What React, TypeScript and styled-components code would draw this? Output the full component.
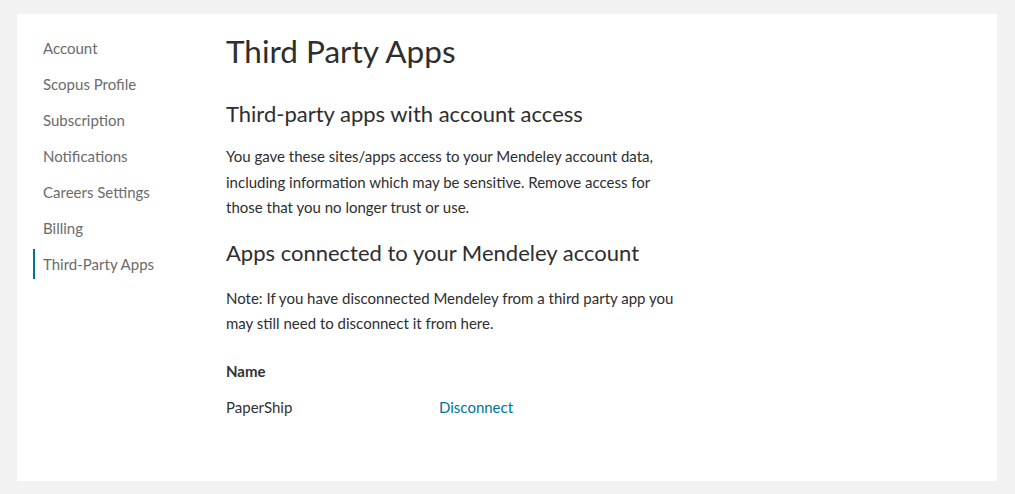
import styled, { createGlobalStyle } from "styled-components";

const GlobalStyle = createGlobalStyle`
  html, body {
    margin: 0;
    padding: 0;
    background: #f2f2f2;
  }
  body {
    font-family: Lato, "Open Sans", sans-serif;
    color: #323232;
  }
`;

const navItems = [
  "Account",
  "Scopus Profile",
  "Subscription",
  "Notifications",
  "Careers Settings",
  "Billing",
  "Third-Party Apps",
];

const apps = [{ name: "PaperShip" }];

const App = () => {
  return (
    <>
      <GlobalStyle />
      <Page>
        <Card>
          <Sidebar>
            {navItems.map((item) => (
              <NavItem key={item} $active={item === "Third-Party Apps"}>
                {item}
              </NavItem>
            ))}
          </Sidebar>
          <Main>
            <Title>Third Party Apps</Title>
            <Heading>Third-party apps with account access</Heading>
            <Text>
              You gave these sites/apps access to your Mendeley account data,
              including information which may be sensitive. Remove access for
              those that you no longer trust or use.
            </Text>
            <Heading>Apps connected to your Mendeley account</Heading>
            <Text $spaced>
              Note: If you have disconnected Mendeley from a third party app you
              may still need to disconnect it from here.
            </Text>
            <Table>
              <thead>
                <tr>
                  <Th>Name</Th>
                  <Th />
                </tr>
              </thead>
              <tbody>
                {apps.map((app) => (
                  <tr key={app.name}>
                    <Td>{app.name}</Td>
                    <Td>
                      <Link href="#">Disconnect</Link>
                    </Td>
                  </tr>
                ))}
              </tbody>
            </Table>
          </Main>
        </Card>
      </Page>
    </>
  );
};

const Page = styled.div`
  padding: 14px 18px 13px 17px;
`;

const Card = styled.div`
  background: #fff;
  height: 467px;
  display: flex;
  box-sizing: border-box;
`;

const Sidebar = styled.nav`
  width: 193px;
  padding: 19px 0 0 16px;
  display: flex;
  flex-direction: column;
  gap: 6px;
`;

const NavItem = styled.a<{ $active: boolean }>`
  display: block;
  height: 30px;
  line-height: 30px;
  padding-left: 8px;
  border-left: 2px solid ${({ $active }) => ($active ? "#007398" : "transparent")};
  font-size: 15px;
  color: #6b6b6b;
  cursor: pointer;
`;

const Main = styled.main`
  padding-top: 17px;
  width: 455px;
`;

const Title = styled.h1`
  margin: 0 0 28px;
  font-size: 31.5px;
  font-weight: 400;
  line-height: 40px;
  color: #2e2e2e;
`;

const Heading = styled.h2`
  margin: 0 0 15px;
  font-size: 22px;
  font-weight: 400;
  line-height: 30px;
  color: #2e2e2e;
`;

const Text = styled.p<{ $spaced?: boolean }>`
  margin: ${({ $spaced }) => ($spaced ? "18px" : "0")} 0 17px;
  font-size: 15px;
  line-height: 25.5px;
  color: #2e2e2e;
`;

const Table = styled.table`
  border-collapse: collapse;
  margin-top: 22px;
  font-size: 15px;
`;

const Th = styled.th`
  text-align: left;
  font-weight: 700;
  width: 213px;
  padding: 0 0 12px;
  line-height: 24px;
`;

const Td = styled.td`
  padding: 0;
  line-height: 24px;
`;

const Link = styled.a`
  color: #007398;
  text-decoration: none;
`;

export default App;
